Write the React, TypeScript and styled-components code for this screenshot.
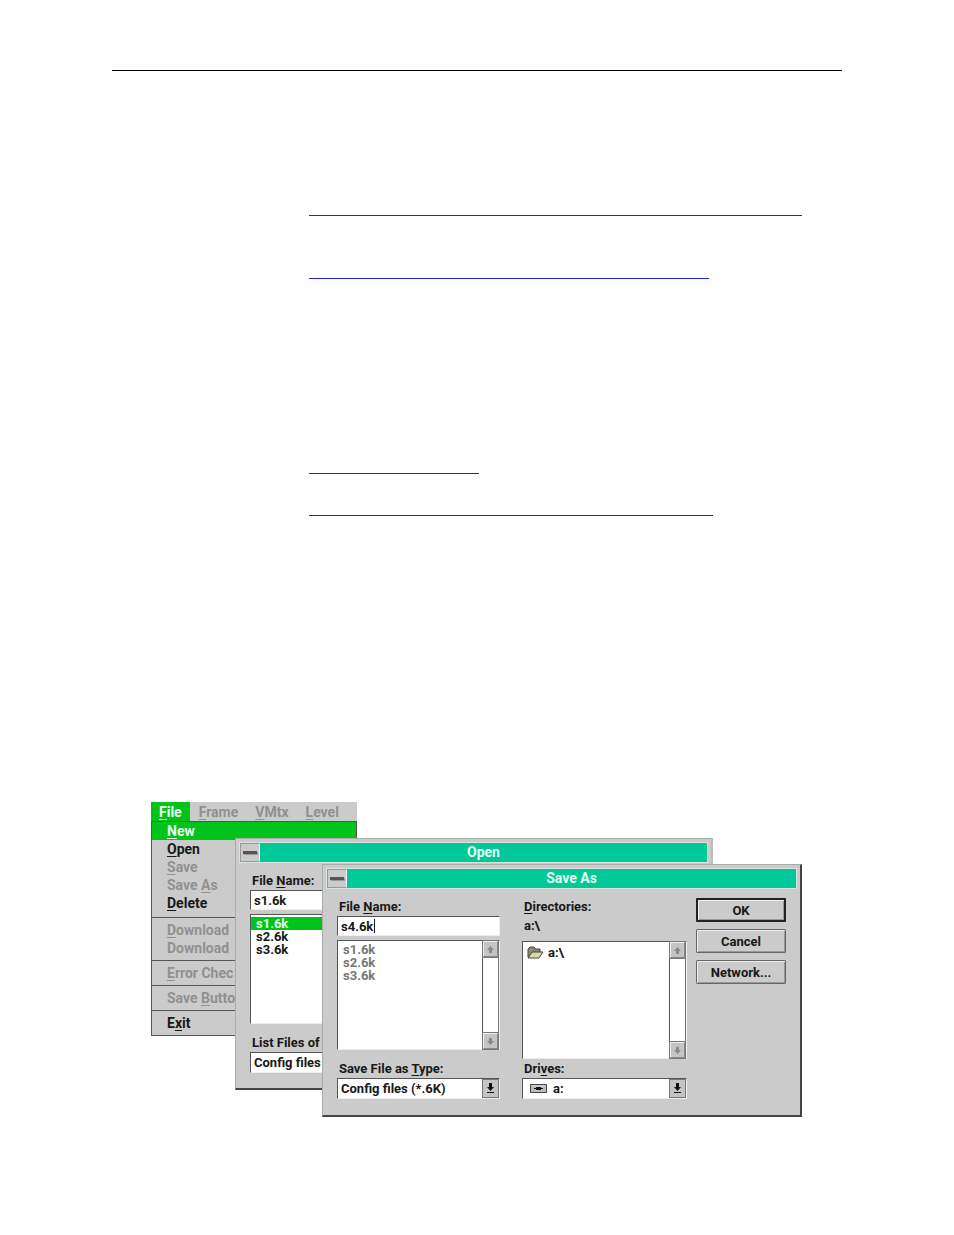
import React from "react";
import styled, { createGlobalStyle, css } from "styled-components";

const face = "#cbcbcb";
const green = "#00c41c";
const teal = "#00c896";

const GlobalStyle = createGlobalStyle`
  * { box-sizing: border-box; }
  body { margin: 0; background: #fff; }
  u { text-underline-offset: 2px; }
  button, input, select { font: inherit; color: inherit; border-radius: 0; appearance: none; margin: 0; }
`;

const Page = styled.main`
  padding: 70px 112px 118px;
  font: 700 13px/15px Roboto, "Liberation Sans", sans-serif;
  color: #181818;
`;

const HeaderRule = styled.hr`
  height: 1px;
  border: 0;
  margin: 0;
  background: #000;
`;

const Rules = styled.div`
  display: flex;
  flex-direction: column;
  padding: 144px 0 286px 197px;
`;

const TextRule = styled.hr<{ $width: number; $gap: number }>`
  width: ${(p) => p.$width}px;
  max-width: 100%;
  height: 1px;
  border: 0;
  margin: 0 0 ${(p) => p.$gap}px;
  background: #1a22e8;
`;

const Desktop = styled.section`
  position: relative;
  height: 315px;
  margin-left: 39px;
`;

const MenuPanel = styled.nav`
  width: 206px;
  font-size: 14px;
  line-height: 18px;
  color: #909090;
  background: ${face};
`;

const MenuBar = styled.div`
  display: flex;
  gap: 1px;
  height: 19px;
`;

const MenuTitle = styled.button<{ $active?: boolean }>`
  border: 0;
  padding: 0 8px;
  height: 19px;
  background: ${(p) => (p.$active ? green : "transparent")};
  color: ${(p) => (p.$active ? "#f0fff0" : "#909090")};
`;

const MenuList = styled.div`
  border: 1px solid #555;
`;

const MenuGroup = styled.div`
  padding-bottom: 5px;
  & + & { border-top: 1px solid #555; padding: 3px 0; }
`;

const MenuItem = styled.button<{ $state?: "active" | "enabled" }>`
  display: block;
  width: 100%;
  height: 18px;
  padding: 0 15px;
  border: 0;
  text-align: left;
  white-space: nowrap;
  background: ${(p) => (p.$state === "active" ? green : "transparent")};
  color: ${(p) => (p.$state === "active" ? "#f0fff0" : p.$state === "enabled" ? "#181818" : "#909090")};
`;

const Dialog = styled.section<{ $left: number; $top: number; $width: number; $height: number; $front?: boolean }>`
  position: absolute;
  left: ${(p) => p.$left}px;
  top: ${(p) => p.$top}px;
  width: ${(p) => p.$width}px;
  height: ${(p) => p.$height}px;
  background: ${face};
  border: 1px solid #aaa;
  border-right: 2px solid ${(p) => (p.$front ? "#444" : "#bbb")};
  border-bottom: 2px solid #444;
  padding: 3px;
`;

const TitleBar = styled.header`
  display: flex;
  height: 21px;
  border: 1px solid #d8e4e0;
`;

const SystemButton = styled.button`
  display: flex;
  align-items: center;
  justify-content: center;
  width: 20px;
  padding: 0;
  border: 1px solid #999;
  border-right-color: #eee;
  background: ${face};
`;

const SystemBar = styled.span`
  width: 14px;
  height: 3px;
  background: #555;
  box-shadow: 1px 1px #999;
`;

const Title = styled.h2`
  flex: 1;
  margin: 0;
  font-size: 14px;
  line-height: 19px;
  text-align: center;
  color: #e8fff6;
  background: ${teal};
`;

const DialogBody = styled.div`
  display: flex;
  padding: 9px 11px 0;
`;

const Column = styled.div<{ $width: number; $gap?: number }>`
  display: flex;
  flex-direction: column;
  width: ${(p) => p.$width}px;
  margin-right: ${(p) => p.$gap ?? 0}px;
`;

const Label = styled.label`
  height: 18px;
  line-height: 17px;
  padding-left: 2px;
  white-space: nowrap;
`;

const sunken = css`
  background: #fff;
  border: 1px solid #555;
  border-right-color: #eee;
  border-bottom-color: #eee;
`;

const Field = styled.div`
  position: relative;
  display: flex;
`;

const TextInput = styled.input`
  ${sunken}
  height: 20px;
  width: 100%;
  padding: 0 3px;
  outline: none;
`;

const Caret = styled.span`
  position: absolute;
  left: 37px;
  top: 3px;
  width: 1px;
  height: 14px;
  background: #181818;
`;

const PathText = styled.output`
  display: block;
  height: 25px;
  padding: 2px;
`;

const ListFrame = styled.div<{ $height: number; $muted?: boolean; $gap?: number }>`
  ${sunken}
  display: flex;
  height: ${(p) => p.$height}px;
  margin-top: ${(p) => p.$gap ?? 0}px;
  color: ${(p) => (p.$muted ? "#777" : "#181818")};
`;

const Items = styled.ul`
  flex: 1;
  list-style: none;
  margin: 0;
  padding: 2px 0 0;
`;

const Item = styled.li<{ $selected?: boolean }>`
  display: flex;
  align-items: center;
  gap: 4px;
  height: 13px;
  padding-left: 5px;
  line-height: 13px;
  background: ${(p) => (p.$selected ? green : "transparent")};
  color: ${(p) => (p.$selected ? "#e8ffe8" : "inherit")};
`;

const FolderItem = styled(Item)`
  height: 16px;
  padding-left: 4px;
`;

const ScrollTrack = styled.div`
  display: flex;
  flex-direction: column;
  justify-content: space-between;
  width: 17px;
  border-left: 1px solid #555;
  border-right: 1px solid #777;
`;

const ArrowButton = styled.button`
  display: flex;
  align-items: center;
  justify-content: center;
  height: 16px;
  padding: 0;
  border: 1px solid #888;
  border-top-color: #eee;
  border-left-color: #eee;
  outline: 1px solid #777;
  background: #c4c4c4;
`;

const Spacer = styled.div<{ $height: number }>`
  height: ${(p) => p.$height}px;
`;

const SelectFrame = styled.div`
  ${sunken}
  position: relative;
  display: flex;
  align-items: center;
  height: 21px;
`;

const Select = styled.select<{ $icon?: boolean }>`
  width: 100%;
  height: 19px;
  padding: 0 20px 0 ${(p) => (p.$icon ? 30 : 3)}px;
  border: 0;
  background: transparent;
`;

const SelectArrow = styled.span`
  position: absolute;
  right: 0;
  top: 0;
  display: flex;
  align-items: center;
  justify-content: center;
  width: 17px;
  height: 19px;
  border: 1px solid #777;
  background: #c4c4c4;
  pointer-events: none;
`;

const DriveBadge = styled.span`
  position: absolute;
  left: 7px;
  top: 5px;
  display: flex;
`;

const Actions = styled.div`
  display: flex;
  flex-direction: column;
  gap: 7px;
  width: 90px;
`;

const PushButton = styled.button<{ $primary?: boolean }>`
  height: 24px;
  padding: 0;
  border: ${(p) => (p.$primary ? "2px solid #222" : "1px solid #666")};
  border-radius: 1px;
  box-shadow: inset 1px 1px #eee, inset -1px -1px #999;
  background: ${face};
`;

const ListArrow = ({ down }: { down?: boolean }) => (
  <svg width="9" height="9" viewBox="0 0 9 9" aria-hidden="true">
    <path d={down ? "M3 1h3v3h2L4.500 8 1 4h2z" : "M3 8h3V5h2L4.500 1 1 5h2z"} fill="#8a8a8a" />
  </svg>
);

const DropArrow = () => (
  <svg width="9" height="11" viewBox="0 0 9 11" aria-hidden="true">
    <path d="M3 0h3v4h2L4.500 8 1 4h2zM1 9h7v1H1z" fill="#111" />
  </svg>
);

const Folder = () => (
  <svg width="17" height="13" viewBox="0 0 17 13" aria-hidden="true">
    <path d="M1 11V3l2-2h4l1 2h5v3" fill="#8a8a70" stroke="#444" />
    <path d="M1 12l4-6h11l-4 6z" fill="#d8d8a8" stroke="#444" />
  </svg>
);

const Drive = () => (
  <svg width="17" height="10" viewBox="0 0 17 10" aria-hidden="true">
    <path d="M.5.5h16v8H.5z" fill="#bbb" stroke="#444" />
    <path d="M4 4h9v1H4zM6 3h5v3H6z" fill="#111" />
    <path d="M2 2h13" stroke="#ddd" />
  </svg>
);

const Scrollbar = () => (
  <ScrollTrack>
    <ArrowButton aria-label="Scroll up"><ListArrow /></ArrowButton>
    <ArrowButton aria-label="Scroll down"><ListArrow down /></ArrowButton>
  </ScrollTrack>
);

const DialogTitle = ({ children }: { children: string }) => (
  <TitleBar>
    <SystemButton aria-label="Window menu"><SystemBar /></SystemButton>
    <Title>{children}</Title>
  </TitleBar>
);

export default function App() {
  return (
    <Page>
      <GlobalStyle />
      <HeaderRule />
      <Rules>
        <TextRule $width={493} $gap={62} />
        <TextRule $width={400} $gap={194} />
        <TextRule $width={170} $gap={41} />
        <TextRule $width={404} $gap={0} />
      </Rules>
      <Desktop>
        <MenuPanel>
          <MenuBar>
            <MenuTitle $active><u>F</u>ile</MenuTitle>
            <MenuTitle><u>F</u>rame</MenuTitle>
            <MenuTitle><u>V</u>Mtx</MenuTitle>
            <MenuTitle><u>L</u>evel</MenuTitle>
          </MenuBar>
          <MenuList>
            <MenuGroup>
              <MenuItem $state="active"><u>N</u>ew</MenuItem>
              <MenuItem $state="enabled"><u>O</u>pen</MenuItem>
              <MenuItem><u>S</u>ave</MenuItem>
              <MenuItem>Save <u>A</u>s</MenuItem>
              <MenuItem $state="enabled"><u>D</u>elete</MenuItem>
            </MenuGroup>
            <MenuGroup>
              <MenuItem><u>D</u>ownload</MenuItem>
              <MenuItem>Download</MenuItem>
            </MenuGroup>
            <MenuGroup><MenuItem><u>E</u>rror Chec</MenuItem></MenuGroup>
            <MenuGroup><MenuItem>Save <u>B</u>utto</MenuItem></MenuGroup>
            <MenuGroup><MenuItem $state="enabled">E<u>x</u>it</MenuItem></MenuGroup>
          </MenuList>
        </MenuPanel>

        <Dialog $left={84} $top={36} $width={478} $height={252} aria-label="Open">
          <DialogTitle>Open</DialogTitle>
          <DialogBody>
            <Column $width={164}>
              <Label htmlFor="open-name">File <u>N</u>ame:</Label>
              <TextInput id="open-name" defaultValue="s1.6k" />
              <ListFrame $height={110} $gap={4}>
                <Items>
                  <Item $selected>s1.6k</Item>
                  <Item>s2.6k</Item>
                  <Item>s3.6k</Item>
                </Items>
              </ListFrame>
              <Spacer $height={10} />
              <Label htmlFor="open-type">List Files of</Label>
              <SelectFrame>
                <Select id="open-type"><option>Config files</option></Select>
              </SelectFrame>
            </Column>
          </DialogBody>
        </Dialog>

        <Dialog $left={171} $top={62} $width={480} $height={253} $front aria-label="Save As">
          <DialogTitle>Save As</DialogTitle>
          <DialogBody>
            <Column $width={163} $gap={22}>
              <Label htmlFor="save-name">File <u>N</u>ame:</Label>
              <Field>
                <TextInput id="save-name" defaultValue="s4.6k" />
                <Caret />
              </Field>
              <ListFrame $height={110} $gap={4} $muted>
                <Items>
                  <Item>s1.6k</Item>
                  <Item>s2.6k</Item>
                  <Item>s3.6k</Item>
                </Items>
                <Scrollbar />
              </ListFrame>
              <Spacer $height={10} />
              <Label htmlFor="save-type">Save File as <u>T</u>ype:</Label>
              <SelectFrame>
                <Select id="save-type"><option>Config files (*.6K)</option></Select>
                <SelectArrow><DropArrow /></SelectArrow>
              </SelectFrame>
            </Column>
            <Column $width={165} $gap={9}>
              <Label as="span"><u>D</u>irectories:</Label>
              <PathText>a:\</PathText>
              <ListFrame $height={118}>
                <Items>
                  <FolderItem><Folder />a:\</FolderItem>
                </Items>
                <Scrollbar />
              </ListFrame>
              <Spacer $height={1} />
              <Label htmlFor="drive">Dri<u>v</u>es:</Label>
              <SelectFrame>
                <DriveBadge><Drive /></DriveBadge>
                <Select id="drive" $icon><option>a:</option></Select>
                <SelectArrow><DropArrow /></SelectArrow>
              </SelectFrame>
            </Column>
            <Actions>
              <PushButton $primary>OK</PushButton>
              <PushButton>Cancel</PushButton>
              <PushButton>Network...</PushButton>
            </Actions>
          </DialogBody>
        </Dialog>
      </Desktop>
    </Page>
  );
}
